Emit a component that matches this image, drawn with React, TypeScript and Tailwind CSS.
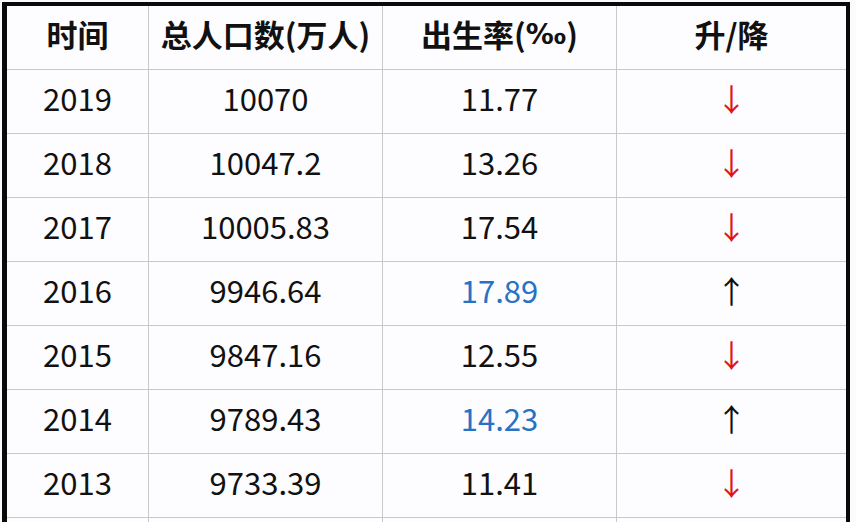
const rows: { year: string; pop: string; rate: string; up: boolean }[] = [
  { year: "2019", pop: "10070", rate: "11.77", up: false },
  { year: "2018", pop: "10047.2", rate: "13.26", up: false },
  { year: "2017", pop: "10005.83", rate: "17.54", up: false },
  { year: "2016", pop: "9946.64", rate: "17.89", up: true },
  { year: "2015", pop: "9847.16", rate: "12.55", up: false },
  { year: "2014", pop: "9789.43", rate: "14.23", up: true },
  { year: "2013", pop: "9733.39", rate: "11.41", up: false },
  { year: "", pop: "", rate: "", up: false },
];

const cols = "grid grid-cols-[142px_234px_234px_229px]";
const cell = "flex items-center justify-center border-b border-[#c9c9cc] pb-[6px]";

export default function App() {
  return (
    <div
      className="h-[522px] w-[856px] overflow-hidden bg-[#fbfbfd] pl-[2px] pt-[2px]"
      style={{ fontFamily: '"Noto Sans CJK SC", "Noto Sans", sans-serif' }}
    >
      <div className="w-[848px] border-l-[5px] border-t-[4px] border-r-[4px] border-[#0a0a0a] bg-[#fdfcfe]">
        <div className={`${cols} h-[64px] text-[31px] font-bold text-[#111]`}>
          <div className={`${cell} border-r`}>时间</div>
          <div className={`${cell} border-r`}>总人口数(万人)</div>
          <div className={`${cell} border-r`}>
            出生率(<span className="font-['DejaVu_Sans',sans-serif] text-[28px]">‰</span>)
          </div>
          <div className={cell}>升/降</div>
        </div>
        {rows.map((r, i) => (
          <div key={i} className={`${cols} h-[64px] text-[31px] text-[#111]`}>
            <div className={`${cell} border-r`}>{r.year}</div>
            <div className={`${cell} border-r`}>{r.pop}</div>
            <div className={`${cell} border-r ${r.up ? "text-[#2672c4]" : ""}`}>{r.rate}</div>
            <div className={`${cell} ${r.up ? "text-[#111]" : "text-[#e3121a]"}`}>
              {r.year && (r.up ? "↑" : "↓")}
            </div>
          </div>
        ))}
      </div>
    </div>
  );
}
